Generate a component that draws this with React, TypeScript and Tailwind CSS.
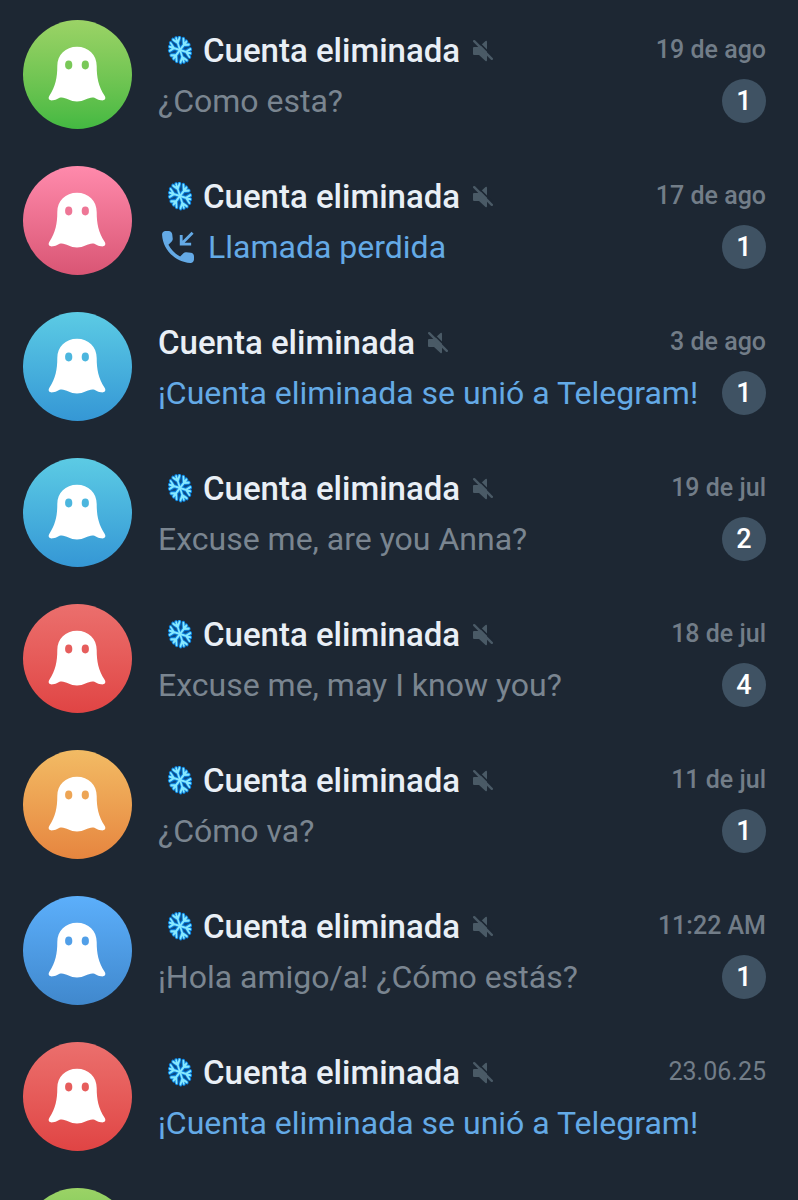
type Preview = "text" | "service" | "call";

interface Chat {
    id: number;
    avatar: string;
    eyes: string;
    frozen: boolean;
    preview: string;
    kind: Preview;
    date: string;
    unread: number;
}

const GREEN = "from-[#9bd366] to-[#43b942]";
const PINK = "from-[#ff8aac] to-[#d95574]";
const CYAN = "from-[#5ccbe4] to-[#3597d5]";
const RED = "from-[#eb6f6d] to-[#e04444]";
const ORANGE = "from-[#f2bb64] to-[#e6853f]";
const BLUE = "from-[#5caffb] to-[#4088cd]";

const chats: Chat[] = [
    { id: 1, avatar: GREEN, eyes: "fill-[#79c858]", frozen: true, preview: "¿Como esta?", kind: "text", date: "19 de ago", unread: 1 },
    { id: 2, avatar: PINK, eyes: "fill-[#ee7696]", frozen: true, preview: "Llamada perdida", kind: "call", date: "17 de ago", unread: 1 },
    { id: 3, avatar: CYAN, eyes: "fill-[#4cb6de]", frozen: false, preview: "¡Cuenta eliminada se unió a Telegram!", kind: "service", date: "3 de ago", unread: 1 },
    { id: 4, avatar: CYAN, eyes: "fill-[#4cb6de]", frozen: true, preview: "Excuse me, are you Anna?", kind: "text", date: "19 de jul", unread: 2 },
    { id: 5, avatar: RED, eyes: "fill-[#e65d5c]", frozen: true, preview: "Excuse me, may I know you?", kind: "text", date: "18 de jul", unread: 4 },
    { id: 6, avatar: ORANGE, eyes: "fill-[#eda555]", frozen: true, preview: "¿Cómo va?", kind: "text", date: "11 de jul", unread: 1 },
    { id: 7, avatar: BLUE, eyes: "fill-[#519fe8]", frozen: true, preview: "¡Hola amigo/a! ¿Cómo estás?", kind: "text", date: "11:22 AM", unread: 1 },
    { id: 8, avatar: RED, eyes: "fill-[#e65d5c]", frozen: true, preview: "¡Cuenta eliminada se unió a Telegram!", kind: "service", date: "23.06.25", unread: 0 },
];

function GhostAvatar({ gradient, eyes }: { gradient: string; eyes: string }) {
    return (
        <div className={`size-[109px] shrink-0 rounded-full bg-linear-to-b ${gradient}`}>
            <svg viewBox="0 0 109 109" className="size-full" aria-hidden="true">
                <path
                    className="fill-white"
                    d="M54 26.7C42.5 26.7 34.3 34.8 34.3 46C34.3 58 32.5 66 26.4 75.8C24.4 79 26.6 80.8 30 80.3C34 79.7 35.6 77.4 38.6 77.4C43.2 77.4 47.5 81.4 54 81.4C60.5 81.4 64.8 77.4 69.4 77.4C72.4 77.4 74 79.7 78 80.3C81.4 80.8 83.6 79 81.6 75.8C75.5 66 73.7 58 73.7 46C73.7 34.8 65.5 26.7 54 26.7Z"
                />
                <ellipse className={eyes} cx="45.7" cy="45" rx="3.6" ry="4.4" />
                <ellipse className={eyes} cx="62.3" cy="45" rx="3.6" ry="4.4" />
            </svg>
        </div>
    );
}

function Snowflake() {
    const arm = "M0 0V-11.5M-3.8 -11L0 -6.8L3.8 -11";
    const angles = [0, 60, 120, 180, 240, 300];
    return (
        <svg viewBox="-13 -15 26 30" className="ml-2 mr-[11px] h-[30px] w-[26px] shrink-0" fill="none" strokeLinecap="round" aria-hidden="true">
            <g transform="translate(1 -1) rotate(-18) scale(0.88 1.08)">
                <circle r="10.5" fill="#0b4a86" />
                <g stroke="#0a7fdc" strokeWidth="4">
                    {angles.map((a) => <path key={a} d={arm} transform={`rotate(${a})`} />)}
                </g>
                <g stroke="#86e9ff" strokeWidth="2">
                    {angles.map((a) => <path key={a} d={arm} transform={`rotate(${a})`} />)}
                </g>
            </g>
        </svg>
    );
}

function MutedIcon() {
    return (
        <svg viewBox="0 0 20 22" className="ml-[13px] h-[22px] w-5 shrink-0" fill="none" strokeLinecap="round" aria-hidden="true">
            <path d="M1 7H6L12.5 1Q14 0 14 2V20Q14 22 12.5 21L6 15H1Q0 15 0 14V8Q0 7 1 7Z" fill="#4a5a66" />
            <path d="M3 -0.4L21.5 18" stroke="#1d2733" strokeWidth="1.6" />
            <path d="M1.2 1.2L18.8 18.8" stroke="#4a5a66" strokeWidth="2.4" />
        </svg>
    );
}

function MissedCallIcon() {
    return (
        <svg viewBox="3 3 18 18" className="ml-1 mr-3.5 size-8 shrink-0" aria-hidden="true">
            <path
                fill="currentColor"
                d="M19.23 15.26l-2.54-.29c-.61-.07-1.21.14-1.64.57l-1.84 1.84c-2.83-1.44-5.15-3.75-6.59-6.59l1.85-1.85c.43-.43.64-1.03.57-1.64l-.29-2.52c-.12-1.01-.97-1.77-1.99-1.77H5.03c-1.13 0-2.07.94-2 2.07.53 8.54 7.36 15.36 15.89 15.89 1.13.07 2.07-.87 2.07-2v-1.73c.01-1.01-.75-1.86-1.76-1.98z"
            />
            <path d="M20.2 4L13.9 10.3M13.8 5.2V10.4H19.4" fill="none" stroke="currentColor" strokeWidth="1.6" />
        </svg>
    );
}

function ChatRow({ chat }: { chat: Chat }) {
    return (
        <li className="flex h-[146px] items-center pl-[23px] pr-8">
            <GhostAvatar gradient={chat.avatar} eyes={chat.eyes} />
            <div className="ml-[26px] min-w-0 flex-1 pt-[3px]">
                <div className="flex h-[50px] items-start">
                    <div className="flex h-full min-w-0 items-center">
                        {chat.frozen && <Snowflake />}
                        <h2 className="truncate text-[33px] leading-[50px] font-medium text-[#e9eff6]">Cuenta eliminada</h2>
                        <MutedIcon />
                    </div>
                    <time className={`ml-auto shrink-0 text-[25px] leading-[48px] text-[#727d88] ${chat.unread ? "font-medium" : "font-normal"}`}>
                        {chat.date}
                    </time>
                </div>
                <div className="flex h-[50px] items-center">
                    <p className={`flex min-w-0 items-center text-[32px] leading-[50px] whitespace-nowrap ${chat.kind === "text" ? "text-[#7a8590]" : "text-[#64aae6]"}`}>
                        {chat.kind === "call" && <MissedCallIcon />}
                        {chat.preview}
                    </p>
                    {chat.unread > 0 && (
                        <span className="ml-auto flex size-11 shrink-0 items-center justify-center rounded-full bg-[#3f5263] text-[27px] leading-[44px] font-medium text-white">
                            {chat.unread}
                        </span>
                    )}
                </div>
            </div>
        </li>
    );
}

export default function App() {
    return (
        <main className="h-screen overflow-hidden bg-[#1d2733] font-[Roboto,sans-serif]">
            <ul className="pt-px">
                {chats.map((chat) => (
                    <ChatRow key={chat.id} chat={chat} />
                ))}
                <li className="flex h-[146px] items-center pl-[23px]">
                    <GhostAvatar gradient={GREEN} eyes="fill-[#79c858]" />
                </li>
            </ul>
        </main>
    );
}
